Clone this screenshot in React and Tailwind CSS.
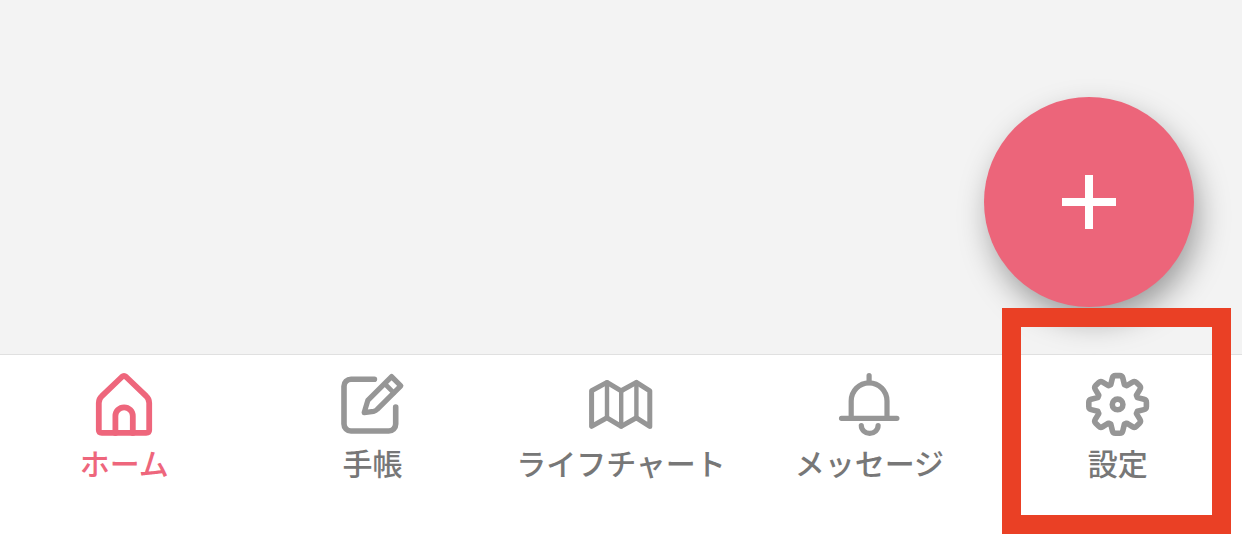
import React, { useState } from "react";

const HomeIcon = () => (
  <svg viewBox="0 0 64 64" className="size-16" fill="none" stroke="currentColor" strokeWidth="5.8" strokeLinecap="round" strokeLinejoin="round" aria-hidden="true">
    <path d="M6.8 58V31q0-4.2 3-6.9L29.8 5q2.2-2 4.4 0l20 19.1q3 2.7 3 6.9V58q0 2.8-3 2.8H9.8q-3 0-3-2.8z" />
    <path d="M23.4 61V44a8.7 8.7 0 0 1 17.4 0v17" />
  </svg>
);

const EditIcon = () => (
  <svg viewBox="0 0 64 64" className="size-16" fill="none" stroke="currentColor" strokeWidth="5.6" strokeLinecap="round" strokeLinejoin="round" aria-hidden="true">
    <path d="M33.4 7.3H10a7 7 0 0 0-7 7V52a7 7 0 0 0 7 7h37.7a7 7 0 0 0 7-7V35" />
    <path strokeWidth="5.2" d="M23.2 40.6l3.6-12.2L50.6 4.6l9.2 9.2-23.6 23.6q-1.4 1.6-3.6 2z" />
    <path strokeWidth="4.6" d="M44 12l8.8 8.8" />
  </svg>
);

const MapIcon = () => (
  <svg viewBox="0 0 64 64" className="size-16" fill="none" stroke="currentColor" strokeWidth="5" strokeLinecap="round" strokeLinejoin="round" aria-hidden="true">
    <path d="M2.6 18.8L18 10.4l14.2 8.4 15.2-8.4 13.4 8.4v35.6l-13.4-8.6-15.2 8.6L18 45.8 2.6 54.4z" />
    <path strokeWidth="4.4" d="M18 10.4v35.4M32.2 18.8v35.6M47.4 10.4v35.4" />
  </svg>
);

const BellIcon = () => (
  <svg viewBox="0 0 64 64" className="size-16" fill="none" stroke="currentColor" strokeWidth="5.2" strokeLinecap="round" strokeLinejoin="round" aria-hidden="true">
    <path d="M14.2 46.3V29a17.9 18.2 0 0 1 35.8 0v17.3" />
    <path d="M4.5 46.3h55.4M32.1 3.6v7" />
    <path d="M24.3 53.6a8.4 7.8 0 0 0 16.8 0" />
  </svg>
);

const TEETH = [0, 45, 90, 135, 180, 225, 270, 315];

// one tooth pointing up, repeated around the centre
const gearPath = () => {
  const parts = TEETH.map((deg) => {
    const a = (deg * Math.PI) / 180;
    const p = (x, y) =>
      `${(31.6 + x * Math.cos(a) - y * Math.sin(a)).toFixed(2)} ${(32.4 + x * Math.sin(a) + y * Math.cos(a)).toFixed(2)}`;
    return `L${p(-6.8, -19.8)}L${p(-5.2, -26.4)}Q${p(-4.6, -28.8)} ${p(-2.2, -28.8)}L${p(2.2, -28.8)}Q${p(4.6, -28.8)} ${p(5.2, -26.4)}L${p(6.8, -19.8)}`;
  });
  return "M" + parts.join("").slice(1) + "Z";
};

const GearIcon = () => (
  <svg viewBox="0 0 64 64" className="size-16" fill="none" stroke="currentColor" strokeWidth="5.6" strokeLinejoin="round" aria-hidden="true">
    <path d={gearPath()} />
    <circle cx="31.6" cy="32.4" r="5.3" />
  </svg>
);

const tabs = [
  { id: "home", label: "ホーム", Icon: HomeIcon },
  { id: "notebook", label: "手帳", Icon: EditIcon },
  { id: "chart", label: "ライフチャート", Icon: MapIcon },
  { id: "message", label: "メッセージ", Icon: BellIcon },
  { id: "settings", label: "設定", Icon: GearIcon, highlighted: true },
];

const App = () => {
  const [active, setActive] = useState("home");

  return (
    <div className="flex min-h-screen flex-col bg-white font-['Noto_Sans_CJK_JP',sans-serif]">
      <main className="relative flex-1 bg-[#f3f3f3]">
        <button
          type="button"
          aria-label="追加"
          className="absolute right-12 bottom-[47px] flex size-[210px] items-center justify-center rounded-full bg-[#ec657a] text-white shadow-[5px_14px_32px_-2px_rgba(0,0,0,0.38)]"
        >
          <svg viewBox="0 0 54 54" className="size-[54px]" fill="none" stroke="currentColor" strokeWidth="8" aria-hidden="true">
            <path d="M27 0v54M0 27h54" />
          </svg>
        </button>
      </main>

      <nav className="relative grid h-[204px] grid-cols-5 border-t border-[#e0e0e0] bg-white pt-[17px]">
        {tabs.map(({ id, label, Icon, highlighted }) => (
          <div key={id} className="relative">
            <button
              type="button"
              onClick={() => setActive(id)}
              className="flex w-full flex-col items-center gap-1.5"
            >
              <span className={active === id ? "text-[#ee667c]" : "text-[#969696]"}>
                <Icon />
              </span>
              <span
                className={`text-[30px] leading-10 font-medium whitespace-nowrap ${
                  active === id ? "text-[#ee667c]" : "text-[#777777]"
                }`}
              >
                {label}
              </span>
            </button>
            {highlighted && (
              <div className="pointer-events-none absolute right-[11px] bottom-6 h-[226px] w-[229px] border-[19px] border-[#ea4025]" />
            )}
          </div>
        ))}
      </nav>
    </div>
  );
};

export default App;
